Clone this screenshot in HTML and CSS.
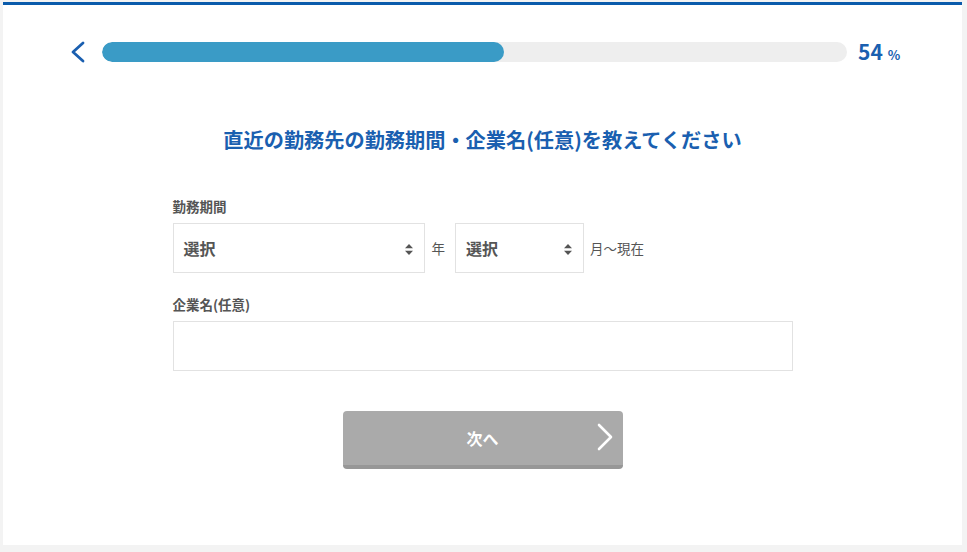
FILE: index.html
```html
<!DOCTYPE html>
<html lang="ja">
<head>
<meta charset="utf-8">
<title>勤務期間</title>
<link rel="stylesheet" href="styles.css">
</head>
<body>
<div class="card">
  <div class="progress-row">
    <a class="back" href="#" aria-label="戻る">
      <svg width="16" height="22" viewBox="0 0 16 22"><path d="M13 2 L3 11 L13 20" fill="none" stroke="#1a5fb0" stroke-width="2.8" stroke-linecap="round" stroke-linejoin="round"/></svg>
    </a>
    <div class="track"><div class="fill" style="width:54%"></div></div>
    <div class="percent"><span class="num">54</span><span class="unit">%</span></div>
  </div>

  <h1 class="title">直近の勤務先の勤務期間・企業名(任意)を教えてください</h1>

  <form class="form">
    <div class="label">勤務期間</div>
    <div class="period">
      <div class="select year">
        <span>選択</span>
        <svg class="arrows" width="8" height="11" viewBox="0 0 8 11"><path d="M4 0 L8 4.3 L0 4.3 Z M4 11 L8 6.7 L0 6.7 Z" fill="#555"/></svg>
      </div>
      <span class="unit-text">年</span>
      <div class="select month">
        <span>選択</span>
        <svg class="arrows" width="8" height="11" viewBox="0 0 8 11"><path d="M4 0 L8 4.3 L0 4.3 Z M4 11 L8 6.7 L0 6.7 Z" fill="#555"/></svg>
      </div>
      <span class="unit-text tail">月〜現在</span>
    </div>

    <div class="label second">企業名(任意)</div>
    <div class="input"></div>

    <div class="btn-wrap">
      <button type="button" class="next">
        <span>次へ</span>
        <svg class="next-arrow" width="16" height="28" viewBox="0 0 16 28"><path d="M2 2 L14 14 L2 26" fill="none" stroke="#fff" stroke-width="2.6" stroke-linecap="round" stroke-linejoin="round"/></svg>
      </button>
    </div>
  </form>
</div>
</body>
</html>
```

FILE: styles.css
```css
* { box-sizing: border-box; }
html, body {
  margin: 0;
  padding: 0;
  background: #f3f3f3;
  font-family: "Noto Sans CJK JP", "Noto Sans", sans-serif;
  color: #555;
}
body { padding-top: 2px; }
.card {
  margin-left: 3px;
  width: 959px;
  height: 543px;
  background: #fff;
  border-top: 3px solid #0a5bab;
}
.progress-row {
  display: flex;
  align-items: center;
  padding-top: 36px;
  padding-left: 67px;
  height: 58px;
}
.back {
  display: flex;
  width: 16px;
  height: 22px;
}
.track {
  margin-left: 16px;
  width: 745px;
  height: 20px;
  background: #eeeeee;
  border-radius: 10px;
  overflow: hidden;
}
.fill {
  height: 100%;
  background: #3a9bc6;
  border-radius: 10px;
}
.percent {
  margin-left: 11px;
  color: #1a5fb0;
  font-weight: 700;
  display: flex;
  align-items: baseline;
}
.percent .num { font-size: 21px; line-height: 22px; }
.percent .unit { font-size: 13px; margin-left: 5px; font-weight: 700; }
.title {
  margin: 63px 0 0;
  text-align: center;
  font-size: 20.2px;
  line-height: 28px;
  font-weight: 700;
  color: #1a5fb0;
}
.form {
  width: 620px;
  margin: 42px auto 0;
}
.label {
  font-size: 13.5px;
  line-height: 20px;
  font-weight: 700;
  color: #555;
  margin-bottom: 7px;
}
.label.second { margin-top: 21px; }
.period {
  display: flex;
  align-items: center;
}
.select {
  height: 50px;
  border: 1px solid #e2e2e2;
  display: flex;
  align-items: center;
  justify-content: space-between;
  padding: 0 11px 0 10px;
  font-size: 16px;
  font-weight: 700;
  color: #555;
}
.select.year { width: 252px; }
.select.month { width: 129px; }
.arrows { display: block; margin-top: 2px; }
.unit-text {
  font-size: 13.5px;
  color: #555;
  margin: 0 10px 0 7px;
}
.unit-text.tail { margin: 0 0 0 6px; }
.input {
  height: 50px;
  border: 1px solid #e2e2e2;
}
.btn-wrap {
  margin-top: 40px;
  display: flex;
  justify-content: center;
}
.next {
  position: relative;
  width: 280px;
  height: 58px;
  border: 0;
  border-bottom: 4px solid #979797;
  border-radius: 4px;
  background: #aaaaaa;
  color: #fff;
  font-family: "Noto Sans CJK JP", "Noto Sans", sans-serif;
  font-size: 16px;
  font-weight: 700;
  display: flex;
  align-items: center;
  justify-content: center;
  padding: 0;
}
.next-arrow {
  position: absolute;
  right: 10px;
  top: 12px;
}
```
